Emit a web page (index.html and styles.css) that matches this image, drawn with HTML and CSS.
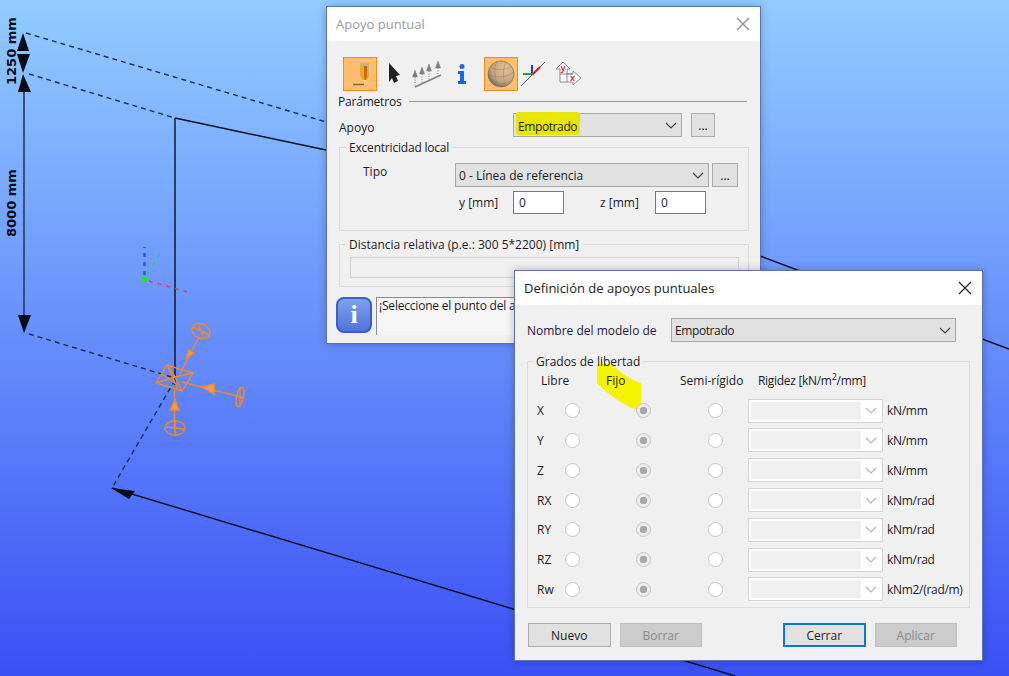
FILE: index.html
```html
<!DOCTYPE html>
<html lang="es">
<head>
    <meta charset="UTF-8">
    <meta name="viewport" content="width=device-width, initial-scale=1.0">
    <title>Apoyo puntual</title>
    <link rel="stylesheet" href="styles.css">
</head>
<body>
    <!-- modelo 3D de fondo -->
    <svg class="model" width="1009" height="676" viewBox="0 0 1009 676">
        <g fill="none" stroke="#0a0f20" stroke-width="1.400">
            <path d="M175 118L326 150M175 118V385M112 488L735 676M760 256L1009 349"/>
            <path stroke="#1c2a4e" stroke-dasharray="5 4" d="M26 33L326 122M29 74L175 118M29 334L175 378M175 380L112 488"/>
        </g>
        <path d="M24 90V318" stroke="#33507f" stroke-width="2" fill="none"/>
        <g fill="#050b18">
            <path d="M23 33L29 51H17Z"/>
            <path d="M17 54H30L23 73Z"/>
            <path d="M23 74L31 92H18Z"/>
            <path d="M18 315H31L24 333Z"/>
            <path d="M111 488L135 491L129 499Z"/>
        </g>
        <text class="dim" transform="translate(16 85) rotate(-90)">1250 mm</text>
        <text class="dim" transform="translate(16 237) rotate(-90)">8000 mm</text>
        <!-- ejes -->
        <path d="M144.500 275V247" stroke="#2b55e8" stroke-width="2.500" stroke-dasharray="4 5" fill="none"/>
        <path d="M147 274L161 252" stroke="#20d45a" stroke-width="1.500" stroke-dasharray="4 6" fill="none"/>
        <path d="M149 281L187 292" stroke="#d83a6a" stroke-width="1.500" stroke-dasharray="4 5" fill="none"/>
        <circle cx="144.500" cy="279.500" r="3" fill="#1ee61e"/>
        <!-- apoyo -->
        <g fill="none" stroke="#ee8a2c" stroke-width="1.400">
            <path d="M156 383L167 365L193 373L182 391ZM156 383L175 377L182 391M167 365L175 377L193 373M167 365L178 389M162 374L176 384"/>
            <path d="M180 374L199 337M182 382L237 396M174.500 390V427"/>
            <ellipse cx="201" cy="331" rx="9.500" ry="7" transform="rotate(25 201 331)"/>
            <path d="M193 327L209 335M198 325L204 337"/>
            <ellipse cx="240" cy="397" rx="3.500" ry="10" transform="rotate(12 240 397)"/>
            <path d="M236 396L244 398M240 387V407"/>
            <ellipse cx="175" cy="428" rx="10" ry="7"/>
            <path d="M166 427L184 429M175 421V435"/>
            <path d="M186 358L189 350L194 353ZM202 387L214 384V394ZM170 410L175 400L179 410Z" fill="#f29a48"/>
        </g>
    </svg>

    <div class="dialog dialog-apoyo">
        <div class="titlebar titlebar-off">
            <span>Apoyo puntual</span>
            <svg class="close" width="14" height="14" viewBox="0 0 14 14"><path d="M1 1L13 13M13 1L1 13"/></svg>
        </div>
        <div class="dialog-body">
            <div class="toolbar">
                <span class="tool tool-on">
                    <svg width="32" height="32" viewBox="0 0 32 32">
                        <path d="M16 5H25V18L21 25L16 18Z" fill="#f0a828"/>
                        <path d="M20 5H23V18L21 25L20 18Z" fill="#c06c0c"/>
                        <path d="M23 8H25V18L23 21Z" fill="#d8a860"/>
                        <path d="M16 5H25V8H16Z" fill="#c8b080"/>
                        <path d="M19 22L21 25L22.500 22Z" fill="#f6e4c8"/>
                        <path d="M9 26.500H20" stroke="#7a6a48" stroke-width="1.500"/>
                    </svg>
                </span>
                <svg class="tool-arrow" width="16" height="24" viewBox="0 0 16 24"><path d="M4 1L15 13L11 14L13 19L9 21L7 16L4 20Z" fill="#222"/></svg>
                <svg class="tool-loads" width="32" height="30" viewBox="0 0 32 30" fill="#808080" stroke="#808080">
                    <path d="M4 28L30 16" fill="none" stroke-width="1.500"/>
                    <path d="M4 18V27M11 15V24M18 12V21M27 9V17" fill="none" stroke-dasharray="1 1.500"/>
                    <path d="M4 11L6.500 18H1.500ZM11 8L13.500 15H8.500ZM18 5L20.500 12H15.500ZM27 2L29.500 9H24.500Z" stroke-width=".5"/>
                </svg>
                <svg class="tool-info" width="12" height="24" viewBox="0 0 12 24"><circle cx="6" cy="4.500" r="2.500" fill="#1565ee"/><path d="M2 9H8V19H10V22H2V19H4V12H2Z" fill="#1565ee"/></svg>
                <span class="tool tool-on">
                    <svg width="32" height="32" viewBox="0 0 32 32" fill="none">
                        <defs>
                            <radialGradient id="bola" cx=".65" cy=".3" r=".85">
                                <stop offset="0" stop-color="#e8c090"/>
                                <stop offset=".6" stop-color="#c2a57e"/>
                                <stop offset="1" stop-color="#54544e"/>
                            </radialGradient>
                        </defs>
                        <circle cx="16" cy="16" r="13" fill="url(#bola)" stroke="#6a6a62" stroke-width=".6"/>
                        <path d="M3 16C10 20 22 20 29 14M5 9C12 13 22 12 27 8M6 23C13 27 21 26 26 23M12 3C8 12 10 22 14 29M21 4C17 12 18 22 21 28" stroke="#8a7e6a" stroke-width=".5"/>
                    </svg>
                </span>
                <svg class="tool-axes" width="26" height="30" viewBox="0 0 26 30" fill="none" stroke-width="2">
                    <path d="M0 27L24 3" stroke="#555" stroke-width="1"/>
                    <path d="M11 6V15" stroke="#1040e0"/>
                    <path d="M11 16L19 8" stroke="#e01020"/>
                    <path d="M2 15H12" stroke="#20b020"/>
                </svg>
                <svg class="tool-dirs" width="28" height="28" viewBox="0 0 28 28" fill="#fff" stroke="#8a8a8a">
                    <path d="M1 9L8 2L15 9H12V14H18V11L26 18L18 25V22H5V9Z"/>
                    <path d="M5 14H18M12 14V22" fill="none"/>
                    <text class="axis-letter" x="5.500" y="11">y</text>
                    <text class="axis-letter" x="15" y="20.500">x</text>
                </svg>
            </div>
            <div class="section-head"><span>Parámetros</span><i></i></div>
            <div class="apoyo-row">
                <label>Apoyo</label>
                <div class="combo combo-apoyo"><span class="marker">Empotrado</span><svg class="chev" width="12" height="7" viewBox="0 0 12 7"><path d="M1 1L6 6L11 1"/></svg></div>
                <button class="dots" type="button">...</button>
            </div>
            <fieldset class="group group-exc">
                <legend>Excentricidad local</legend>
                <div class="tipo-row">
                    <label>Tipo</label>
                    <div class="combo combo-tipo"><span>0 - Línea de referencia</span><svg class="chev" width="12" height="7" viewBox="0 0 12 7"><path d="M1 1L6 6L11 1"/></svg></div>
                    <button class="dots" type="button">...</button>
                </div>
                <div class="coord-row">
                    <label>y [mm]</label>
                    <div class="input">0</div>
                    <label class="coord-z">z [mm]</label>
                    <div class="input">0</div>
                </div>
            </fieldset>
            <fieldset class="group group-dist">
                <legend>Distancia relativa (p.e.: 300 5*2200) [mm]</legend>
                <div class="dist-input"></div>
            </fieldset>
            <div class="hint-row">
                <div class="info-badge">i</div>
                <div class="hint">¡Seleccione el punto del apoyo</div>
            </div>
        </div>
    </div>

    <div class="dialog dialog-def">
        <div class="titlebar">
            <span>Definición de apoyos puntuales</span>
            <svg class="close" width="14" height="14" viewBox="0 0 14 14"><path d="M1 1L13 13M13 1L1 13"/></svg>
        </div>
        <div class="dialog-body">
            <div class="name-row">
                <label>Nombre del modelo de</label>
                <div class="combo combo-name"><span class="combo-text">Empotrado</span><svg class="chev" width="12" height="7" viewBox="0 0 12 7"><path d="M1 1L6 6L11 1"/></svg></div>
            </div>
            <fieldset class="group group-dof">
                <legend>Grados de libertad</legend>
                <svg class="scribble" width="44" height="46" viewBox="0 0 44 46"><path d="M0 0H15C22 8 34 16 44 19V45H37C22 38 8 28 0 19Z"/></svg>
                <div class="dof-grid">
                    <span class="col-head col-libre">Libre</span>
                    <span class="col-head col-fijo">Fijo</span>
                    <span class="col-head col-semi">Semi-rígido</span>
                    <span class="col-head col-rig">Rigidez [kN/m<sup>2</sup>/mm]</span>
                    <span>X</span><i class="radio"></i><i class="radio radio-on"></i><i class="radio"></i><div class="combo-off"><b></b><svg class="chev" width="12" height="7" viewBox="0 0 12 7"><path d="M1 1L6 6L11 1"/></svg></div><span class="unit">kN/mm</span>
                    <span>Y</span><i class="radio"></i><i class="radio radio-on"></i><i class="radio"></i><div class="combo-off"><b></b><svg class="chev" width="12" height="7" viewBox="0 0 12 7"><path d="M1 1L6 6L11 1"/></svg></div><span class="unit">kN/mm</span>
                    <span>Z</span><i class="radio"></i><i class="radio radio-on"></i><i class="radio"></i><div class="combo-off"><b></b><svg class="chev" width="12" height="7" viewBox="0 0 12 7"><path d="M1 1L6 6L11 1"/></svg></div><span class="unit">kN/mm</span>
                    <span>RX</span><i class="radio"></i><i class="radio radio-on"></i><i class="radio"></i><div class="combo-off"><b></b><svg class="chev" width="12" height="7" viewBox="0 0 12 7"><path d="M1 1L6 6L11 1"/></svg></div><span class="unit">kNm/rad</span>
                    <span>RY</span><i class="radio"></i><i class="radio radio-on"></i><i class="radio"></i><div class="combo-off"><b></b><svg class="chev" width="12" height="7" viewBox="0 0 12 7"><path d="M1 1L6 6L11 1"/></svg></div><span class="unit">kNm/rad</span>
                    <span>RZ</span><i class="radio"></i><i class="radio radio-on"></i><i class="radio"></i><div class="combo-off"><b></b><svg class="chev" width="12" height="7" viewBox="0 0 12 7"><path d="M1 1L6 6L11 1"/></svg></div><span class="unit">kNm/rad</span>
                    <span>Rw</span><i class="radio"></i><i class="radio radio-on"></i><i class="radio"></i><div class="combo-off"><b></b><svg class="chev" width="12" height="7" viewBox="0 0 12 7"><path d="M1 1L6 6L11 1"/></svg></div><span class="unit">kNm2/(rad/m)</span>
                </div>
            </fieldset>
            <div class="button-row">
                <button type="button" class="btn">Nuevo</button>
                <button type="button" class="btn btn-off">Borrar</button>
                <button type="button" class="btn btn-focus">Cerrar</button>
                <button type="button" class="btn btn-off">Aplicar</button>
            </div>
        </div>
    </div>
</body>
</html>
```

FILE: styles.css
```css
html, body {
    margin: 0;
    height: 100%;
}
body {
    position: relative;
    width: 1009px;
    height: 676px;
    overflow: hidden;
    font-family: "Open Sans", "Liberation Sans", sans-serif;
    font-size: 12px;
    color: #1c1c1c;
    background: linear-gradient(#92ccff, #3a50f5);
}
.model {
    position: absolute;
    left: 0;
    top: 0;
}
.dim {
    font-family: "DejaVu Sans", sans-serif;
    font-size: 13px;
    font-weight: bold;
    fill: #050b18;
}

/* ventanas */
.dialog {
    position: absolute;
    box-sizing: border-box;
    display: flex;
    flex-direction: column;
    background: #f0f0f0;
    border: 1px solid #5f73a6;
    box-shadow: 0 0 8px rgba(0, 0, 50, .25);
}
.dialog-apoyo {
    left: 326px;
    top: 6px;
    width: 435px;
    height: 338px;
}
.dialog-def {
    left: 514px;
    top: 270px;
    width: 469px;
    height: 391px;
}
.titlebar {
    flex: none;
    height: 34px;
    padding: 0 10px 0 9px;
    display: flex;
    align-items: center;
    justify-content: space-between;
    background: #fff;
    font-size: 13px;
}
.titlebar-off {
    color: #9a9a9a;
}
.close {
    fill: none;
    stroke: #222;
    stroke-width: 1.200;
}
.titlebar-off .close {
    stroke: #8c8c8c;
}
.dialog-body {
    flex: 1;
    position: relative;
    min-height: 0;
}

/* barra de iconos */
.toolbar {
    display: flex;
    align-items: center;
    height: 34px;
    margin: 16px 0 0 16px;
}
.tool {
    box-sizing: border-box;
    width: 34px;
    height: 34px;
    display: flex;
    align-items: center;
    justify-content: center;
    background: #fdbe70;
    border: 1px solid #f08a1e;
}
.tool-arrow { margin-left: 8px; }
.tool-loads { margin-left: 10px; }
.tool-info { margin-left: 13px; margin-right: 16px; }
.tool-axes { margin-left: 3px; }
.tool-dirs { margin-left: 8px; }
.axis-letter {
    font: bold 9px "Liberation Sans", sans-serif;
    fill: #e02020;
    stroke: none;
}

.section-head {
    display: flex;
    align-items: center;
    gap: 8px;
    margin: 2px 13px 0 11px;
    height: 16px;
    letter-spacing: -.2px;
}
.section-head i {
    flex: 1;
    height: 1px;
    background: #9a9a9a;
}
.apoyo-row {
    display: flex;
    align-items: center;
    height: 24px;
    margin: 4px 0 0 12px;
}
.apoyo-row label {
    width: 174px;
    margin-top: 4px;
}

/* combos y botones */
.combo {
    box-sizing: border-box;
    height: 24px;
    display: flex;
    align-items: center;
    justify-content: space-between;
    padding: 0 4px 0 3px;
    background: #e1e1e1;
    border: 1px solid #a8a8a8;
}
.combo-apoyo { width: 169px; }
.combo-tipo { width: 254px; }
.combo-name { width: 285px; }
.combo-text {
    letter-spacing: -.4px;
}
.chev {
    flex: none;
    fill: none;
    stroke: #444;
    stroke-width: 1.200;
}
.marker {
    background: #e6e600;
    padding: 6px 3px 0 2px;
    margin-bottom: 4px;
    margin-left: -1px;
    border-radius: 3px;
    letter-spacing: -.4px;
}
.dots {
    box-sizing: border-box;
    width: 24px;
    height: 24px;
    margin-left: 9px;
    padding: 0;
    font: inherit;
    background: #e1e1e1;
    border: 1px solid #adadad;
}

/* grupos */
.group {
    margin: 0;
    padding: 0;
    min-width: 0;
    box-sizing: border-box;
    border: 1px solid #dcdcdc;
}
.group legend {
    position: relative;
    top: 1px;
    padding: 0 3px;
    margin-left: 6px;
    line-height: 16px;
}
.group-exc {
    height: 92px;
    margin: 2px 11px 0 12px;
}
.group-exc legend {
    letter-spacing: -.2px;
}
.tipo-row {
    display: flex;
    align-items: center;
    height: 24px;
    margin-top: 8px;
    padding-left: 23px;
}
.tipo-row label {
    width: 92px;
    margin-top: -8px;
}
.tipo-row .dots {
    width: 26px;
    margin-left: 3px;
}
.coord-row {
    display: flex;
    align-items: center;
    height: 22px;
    margin-top: 4px;
    padding-left: 119px;
}
.coord-row label {
    width: 54px;
}
.coord-row .coord-z {
    width: 55px;
    margin-left: 36px;
}
.input {
    box-sizing: border-box;
    width: 51px;
    height: 23px;
    padding: 2px 5px;
    background: #fff;
    border: 1px solid #7a7a7a;
}
.group-dist {
    height: 51px;
    margin: 5px 11px 0 12px;
}
.dist-input {
    box-sizing: border-box;
    height: 21px;
    margin: 5px 9px 0 10px;
    background: #f0f0f0;
    border: 1px solid #d0d0d0;
}
.hint-row {
    display: flex;
    gap: 4px;
    margin: 10px 0 0 9px;
}
.info-badge {
    box-sizing: border-box;
    width: 36px;
    height: 36px;
    border: 2px solid #3f5fc0;
    border-radius: 8px;
    background: linear-gradient(#7fa0f0, #4f74dc);
    color: #fff;
    font: bold 26px/32px "Liberation Serif", serif;
    text-align: center;
}
.hint {
    flex: 1;
    height: 37px;
    margin-right: 10px;
    padding-left: 2px;
    background: #f6f6f6;
    border-left: 1px solid #8a8a8a;
    border-top: 1px solid #8a8a8a;
    line-height: 16px;
    letter-spacing: -.2px;
    overflow: hidden;
}

/* ventana de definicion */
.name-row {
    display: flex;
    align-items: center;
    margin: 13px 0 0 12px;
}
.name-row label {
    width: 144px;
    color: #1e1a3c;
}
.group-dof {
    position: relative;
    height: 255px;
    margin: 11px 12px 0 12px;
}
.group-dof legend {
    margin-left: 5px;
    z-index: 1;
}
.scribble {
    position: absolute;
    left: 69px;
    top: -5px;
    fill: #f4f400;
}
.dof-grid {
    position: relative;
    display: grid;
    grid-template-columns: 28px 71px 72px 40px 135px auto;
    grid-template-rows: repeat(8, 29.800px);
    align-items: center;
    padding-left: 9px;
    margin-top: -3px;
    white-space: nowrap;
}
.col-libre { padding-left: 4px; }
.col-fijo { padding-left: 41px; }
.col-semi { grid-column: 3 / 5; padding-left: 44px; }
.col-rig {
    grid-column: 5 / 7;
    padding-left: 10px;
    letter-spacing: -.3px;
}
.col-rig sup {
    font-size: 9px;
    line-height: 0;
}
.radio {
    box-sizing: border-box;
    width: 15px;
    height: 15px;
    background: #fff;
    border: 1px solid #c6c6c6;
    border-radius: 50%;
}
.radio-on {
    background: radial-gradient(circle, #a8a8a8 0 3.500px, #ececec 4px);
}
.combo-off {
    box-sizing: border-box;
    width: 135px;
    height: 24px;
    display: flex;
    align-items: center;
    justify-content: space-between;
    padding: 2px 5px 2px 2px;
    background: #fff;
    border: 1px solid #d4d4d4;
}
.combo-off b {
    width: 110px;
    height: 18px;
    background: #f0f0f0;
}
.combo-off .chev {
    stroke: #b4b4b4;
}
.unit {
    padding-left: 4px;
    letter-spacing: -.3px;
}
.button-row {
    display: flex;
    margin: 15px 0 0 13px;
}
.btn {
    box-sizing: border-box;
    width: 82.500px;
    height: 24px;
    margin-right: 9px;
    padding: 0;
    font: inherit;
    color: #1c1c1c;
    background: #e1e1e1;
    border: 1px solid #adadad;
}
.btn-off {
    color: #8a8a8a;
    background: #cccccc;
    border-color: #bfbfbf;
}
.btn-focus {
    margin-left: 72px;
    border: 2px solid #0a78d7;
}
```
